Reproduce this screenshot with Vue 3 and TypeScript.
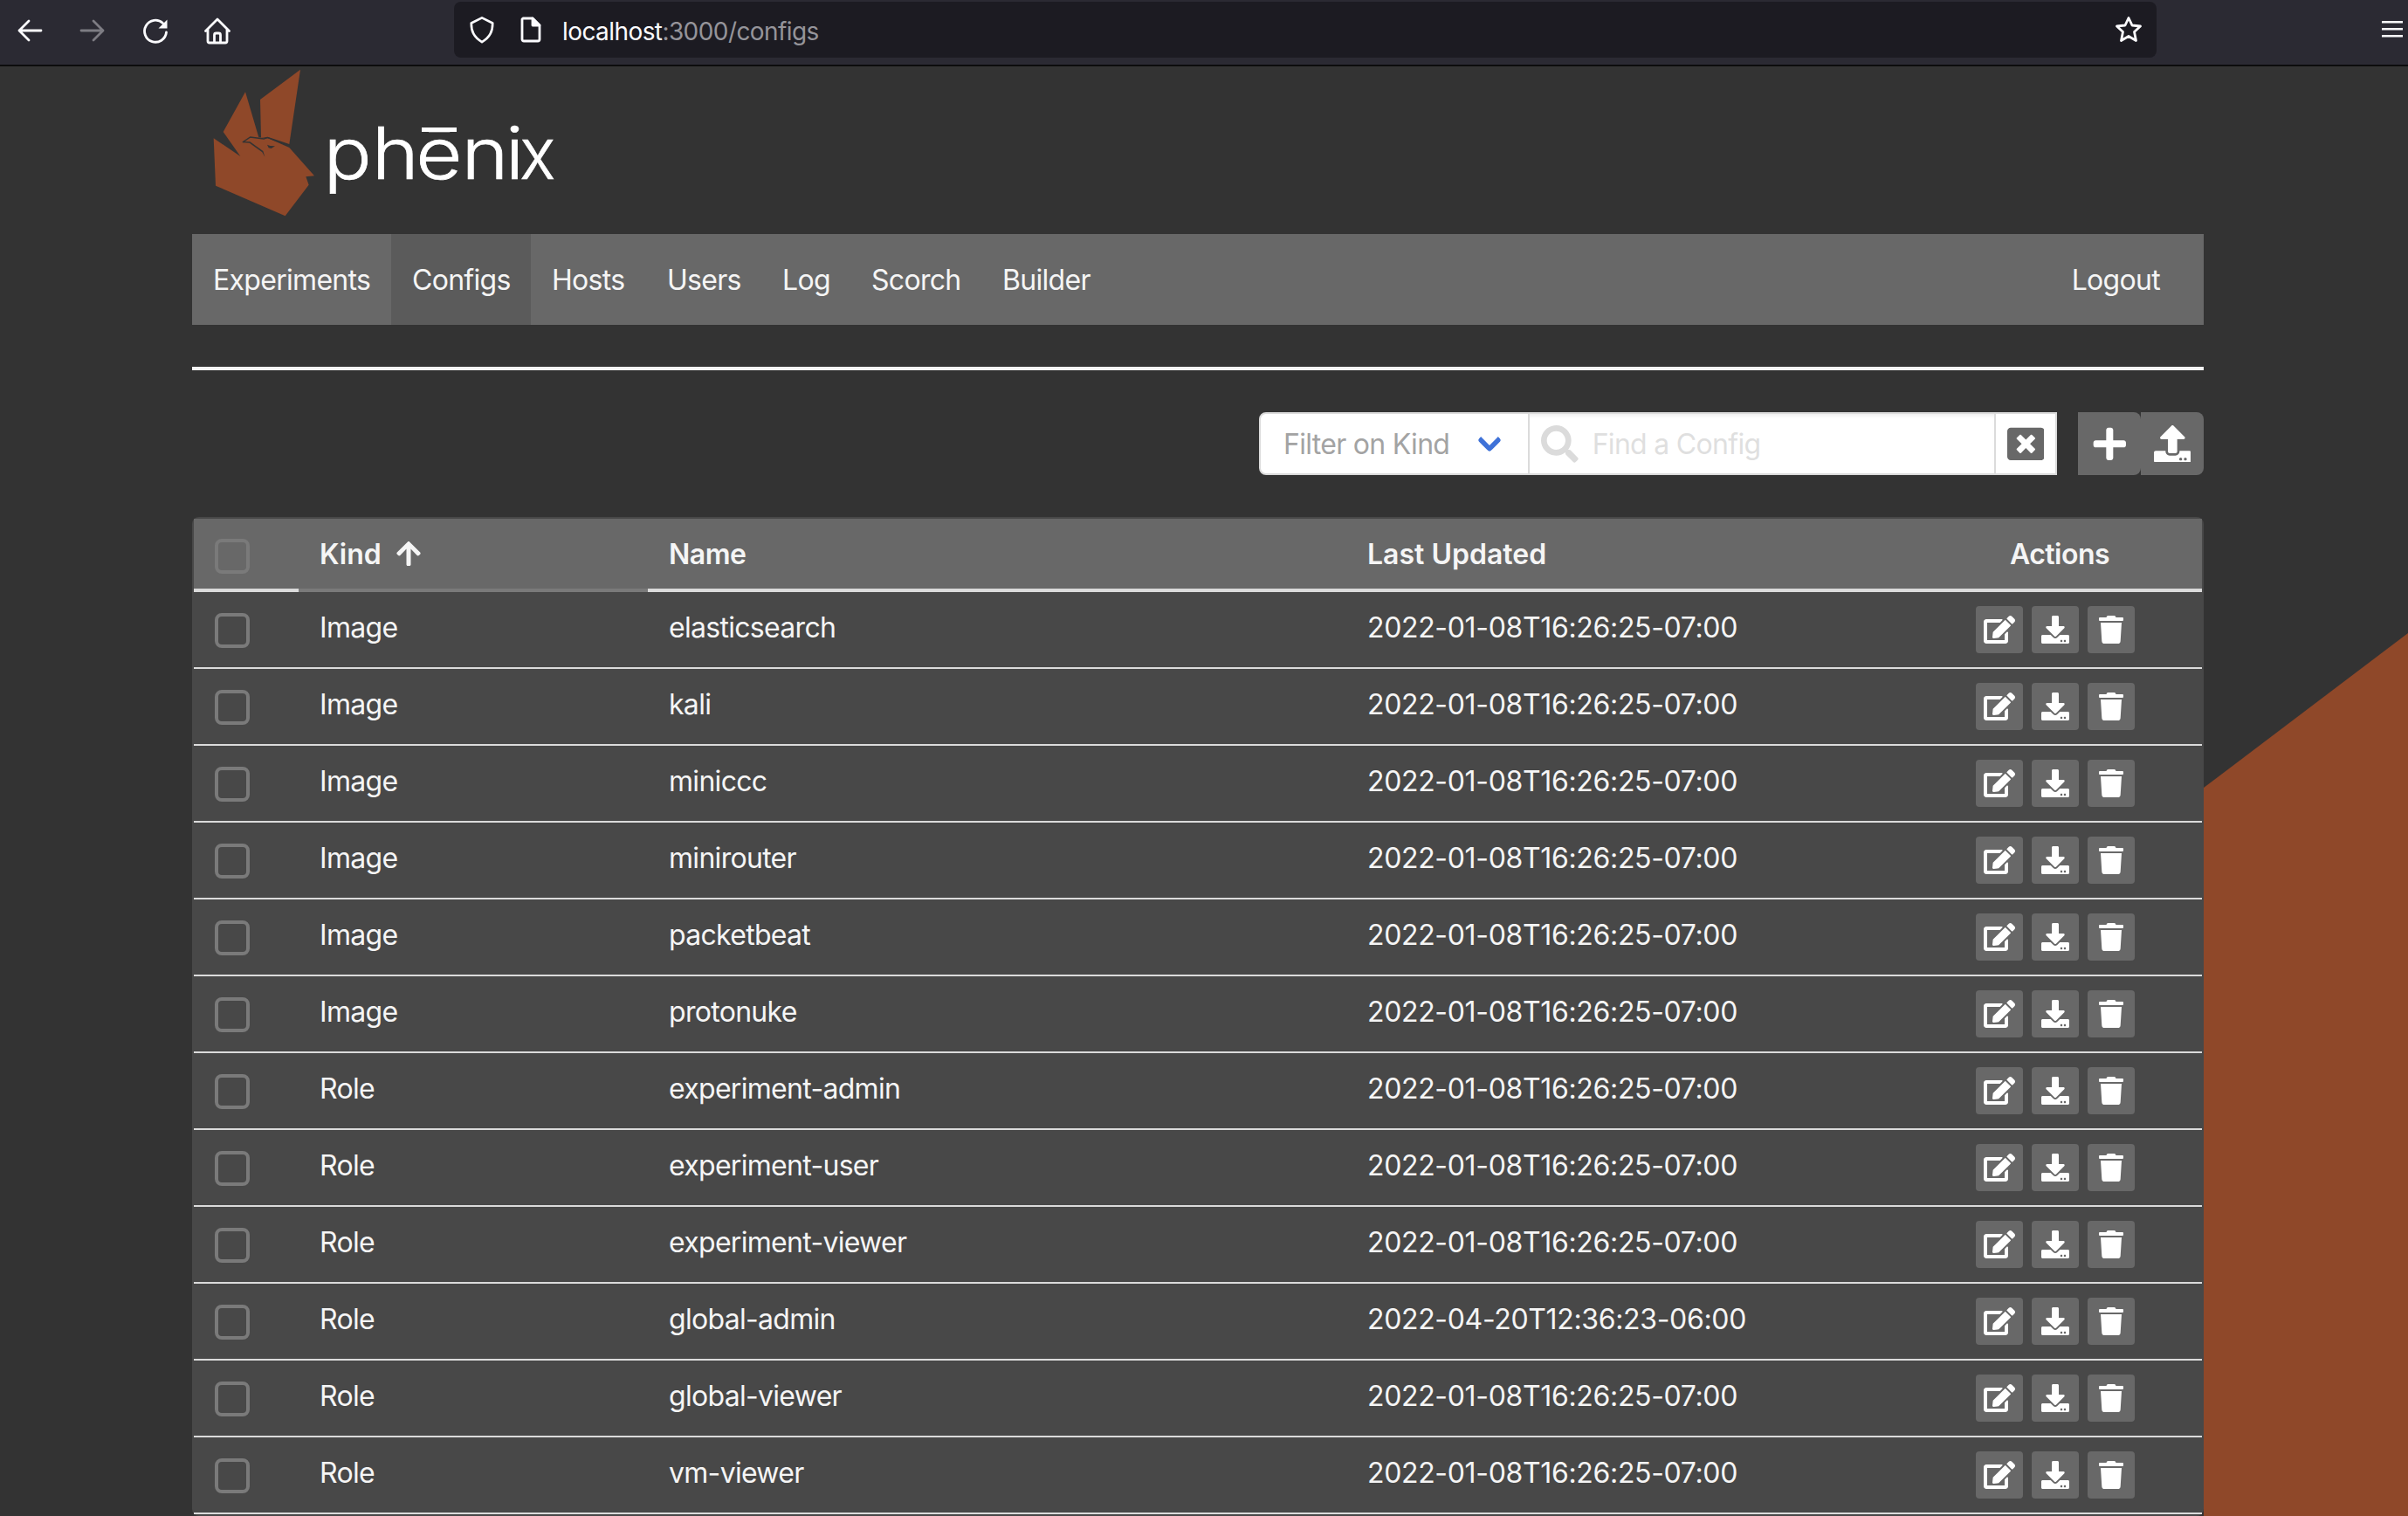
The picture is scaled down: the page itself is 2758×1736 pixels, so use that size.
<script setup lang="ts">
type IconDef = { w: number; d: string }

const icons: Record<string, IconDef> = {
  edit: { w: 576, d: 'M402.6 83.2l90.2 90.2c3.8 3.8 3.8 10 0 13.8L274.4 405.6l-92.8 10.3c-12.4 1.4-22.9-9.1-21.5-21.5l10.3-92.8L388.8 83.2c3.8-3.8 10-3.8 13.8 0zm162-22.9l-48.8-48.8c-15.2-15.2-39.9-15.2-55.2 0l-35.4 35.4c-3.8 3.8-3.8 10 0 13.8l90.2 90.2c3.8 3.8 10 3.8 13.8 0l35.4-35.4c15.2-15.3 15.2-40 0-55.2zM384 346.2V448H64V128h229.8c3.2 0 6.2-1.3 8.5-3.5l40-40c7.6-7.6 2.2-20.5-8.5-20.5H48C21.5 64 0 85.5 0 112v352c0 26.5 21.5 48 48 48h352c26.5 0 48-21.5 48-48V306.2c0-10.7-12.9-16-20.5-8.5l-40 40c-2.2 2.3-3.5 5.3-3.5 8.5z' },
  download: { w: 512, d: 'M216 0h80c13.3 0 24 10.7 24 24v168h87.7c17.8 0 26.7 21.5 14.1 34.1L269.7 378.3c-7.5 7.5-19.8 7.5-27.3 0L90.1 226.1c-12.6-12.6-3.7-34.1 14.1-34.1H192V24c0-13.3 10.7-24 24-24zm296 376v112c0 13.3-10.7 24-24 24H24c-13.3 0-24-10.7-24-24V376c0-13.3 10.7-24 24-24h146.7l49 49c20.1 20.1 52.5 20.1 72.6 0l49-49H488c13.3 0 24 10.7 24 24zm-124 88c0-11-9-20-20-20s-20 9-20 20 9 20 20 20 20-9 20-20zm64 0c0-11-9-20-20-20s-20 9-20 20 9 20 20 20 20-9 20-20z' },
  upload: { w: 512, d: 'M296 384h-80c-13.3 0-24-10.7-24-24V192h-87.7c-17.8 0-26.7-21.5-14.1-34.1L242.3 5.7c7.5-7.5 19.8-7.5 27.3 0l152.2 152.2c12.6 12.6 3.7 34.1-14.1 34.1H320v168c0 13.3-10.7 24-24 24zm216-8v112c0 13.3-10.7 24-24 24H24c-13.3 0-24-10.7-24-24V376c0-13.3 10.7-24 24-24h136v8c0 30.9 25.1 56 56 56h80c30.9 0 56-25.1 56-56v-8h136c13.3 0 24 10.7 24 24zm-124 88c0-11-9-20-20-20s-20 9-20 20 9 20 20 20 20-9 20-20zm64 0c0-11-9-20-20-20s-20 9-20 20 9 20 20 20 20-9 20-20z' },
  trash: { w: 448, d: 'M432 32H312l-9.4-18.7A24 24 0 0 0 281.1 0H166.8a23.72 23.72 0 0 0-21.4 13.3L136 32H16A16 16 0 0 0 0 48v32a16 16 0 0 0 16 16h416a16 16 0 0 0 16-16V48a16 16 0 0 0-16-16zM53.2 467a48 48 0 0 0 47.9 45h245.8a48 48 0 0 0 47.9-45L416 128H32z' },
  plus: { w: 448, d: 'M416 208H272V64c0-17.67-14.33-32-32-32h-32c-17.67 0-32 14.33-32 32v144H32c-17.67 0-32 14.33-32 32v32c0 17.67 14.33 32 32 32h144v144c0 17.67 14.33 32 32 32h32c17.67 0 32-14.33 32-32V304h144c17.67 0 32-14.33 32-32v-32c0-17.67-14.33-32-32-32z' },
  close: { w: 512, d: 'M464 32H48C21.5 32 0 53.5 0 80v352c0 26.5 21.5 48 48 48h416c26.5 0 48-21.5 48-48V80c0-26.5-21.5-48-48-48zm-83.6 290.5c4.8 4.8 4.8 12.6 0 17.4l-40.5 40.5c-4.8 4.8-12.6 4.8-17.4 0L256 313.3l-66.5 67.1c-4.8 4.8-12.6 4.8-17.4 0l-40.5-40.5c-4.8-4.8-4.8-12.6 0-17.4l67.1-66.5-67.1-66.5c-4.8-4.8-4.8-12.6 0-17.4l40.5-40.5c4.8-4.8 12.6-4.8 17.4 0l66.5 67.1 66.5-67.1c4.8-4.8 12.6-4.8 17.4 0l40.5 40.5c4.8 4.8 4.8 12.6 0 17.4L313.3 256l67.1 66.5z' },
  search: { w: 512, d: 'M505 442.7L405.3 343c-4.5-4.5-10.6-7-17-7H372c27.6-35.3 44-79.7 44-128C416 93.1 322.9 0 208 0S0 93.1 0 208s93.1 208 208 208c48.3 0 92.7-16.4 128-44v16.3c0 6.4 2.5 12.5 7 17l99.7 99.7c9.4 9.4 24.6 9.4 33.9 0l28.3-28.3c9.4-9.4 9.4-24.6.1-34zM208 336c-70.7 0-128-57.2-128-128 0-70.7 57.2-128 128-128 70.7 0 128 57.2 128 128 0 70.7-57.2 128-128 128z' },
  arrow: { w: 448, d: 'M34.9 289.5l-22.2-22.2c-9.4-9.4-9.4-24.6 0-33.9L207 39c9.4-9.4 24.6-9.4 33.9 0l194.3 194.3c9.4 9.4 9.4 24.6 0 33.9L413 289.4c-9.5 9.5-25 9.3-34.3-.4L264 168.6V456c0 13.3-10.7 24-24 24h-32c-13.3 0-24-10.7-24-24V168.6L69.2 289.1c-9.3 9.8-24.8 10-34.3.4z' },
}

const rowActions = ['edit', 'download', 'trash']

const navItems = [
  { label: 'Experiments', width: 228 },
  { label: 'Configs', width: 160, active: true },
  { label: 'Hosts', width: 132 },
  { label: 'Users', width: 132 },
  { label: 'Log', width: 102 },
  { label: 'Scorch', width: 150 },
  { label: 'Builder', width: 150 },
]

const stamp = '2022-01-08T16:26:25-07:00'
const rows = [
  { kind: 'Image', name: 'elasticsearch', updated: stamp },
  { kind: 'Image', name: 'kali', updated: stamp },
  { kind: 'Image', name: 'miniccc', updated: stamp },
  { kind: 'Image', name: 'minirouter', updated: stamp },
  { kind: 'Image', name: 'packetbeat', updated: stamp },
  { kind: 'Image', name: 'protonuke', updated: stamp },
  { kind: 'Role', name: 'experiment-admin', updated: stamp },
  { kind: 'Role', name: 'experiment-user', updated: stamp },
  { kind: 'Role', name: 'experiment-viewer', updated: stamp },
  { kind: 'Role', name: 'global-admin', updated: '2022-04-20T12:36:23-06:00' },
  { kind: 'Role', name: 'global-viewer', updated: stamp },
  { kind: 'Role', name: 'vm-viewer', updated: stamp },
]
</script>

<template>
  <div class="window">
    <header class="toolbar">
      <div class="tools">
        <svg class="tool" viewBox="0 0 32 32"><path d="M29 16H4M15 5 4 16l11 11" /></svg>
        <svg class="tool dim" viewBox="0 0 32 32"><path d="M3 16h25M17 5l11 11-11 11" /></svg>
        <svg class="tool" viewBox="0 0 32 32"><path d="M29.500 18a12.500 12.500 0 1 1-4-10.500" /><path d="M30.500 3.500v10h-10z" fill="#fbfbfe" stroke="none" /></svg>
        <svg class="tool" viewBox="0 0 32 32"><path d="M2.500 16.500 16 3l13.500 13.500M5 14.500V28a2 2 0 0 0 2 2h18a2 2 0 0 0 2-2V14.500M12.500 30V21a2 2 0 0 1 2-2h3a2 2 0 0 1 2 2v9" /></svg>
      </div>
      <div class="address">
        <svg class="tool" viewBox="0 0 32 34"><path d="M16 2.500 29 9c0 10-3 17-13 23C6 26 3 19 3 9z" /></svg>
        <svg class="tool page-icon" viewBox="0 0 32 32"><path d="M7 3h11l8 8v16a2 2 0 0 1-2 2H8a2 2 0 0 1-2-2V4z" /><path d="M18 3v8h8z" fill="#fbfbfe" /></svg>
        <span class="url"><b>localhost</b>:3000/configs</span>
        <svg class="tool star" viewBox="0 0 32 32"><path d="M16 2.500 l4 8.500 9.500 1-7 6.500 2 10-8.500-5-8.500 5 2-10-7-6.500 9.500-1z" /></svg>
      </div>
      <svg class="burger" viewBox="0 0 24 20"><path d="M0 1.250h24M0 9.250h24M0 17.250h24" /></svg>
    </header>

    <div class="page">
      <main class="container">
        <svg class="logo" viewBox="30 18 1320 576">
          <g fill="#8f4829">
            <path d="M402 29 264 132l3 131 23-3 74 25z" />
            <path d="M104 265l92 62-59-84 76-137 46 156 31 2 74 33 86 97-29 3 10 28-81 107-239-104z" />
          </g>
          <path d="M205 278l25-17 46 6 14-4 73 28" fill="none" stroke="#333" stroke-width="4" />
          <path d="M203 276l26 1 45 32 6 20-9-16-44-32-24-1z" fill="#333" />
          <path d="M288 287l10 4 17 1-13 8-9-2z" fill="#333" />
          <text class="wordmark" transform="scale(1.12 1)" y="404" x="430 578 713 853 988">phēni<tspan x="1032" textLength="110" lengthAdjust="spacingAndGlyphs">x</tspan></text>
          <path d="M819 228h120v15H819z" fill="#fff" />
        </svg>

        <nav class="navbar">
          <a v-for="n in navItems" :key="n.label" :class="{ active: n.active }" :style="{ width: n.width + 'px' }">{{ n.label }}</a>
          <a class="logout">Logout</a>
        </nav>

        <hr />

        <div class="filters">
          <div class="select">Filter on Kind<i></i></div>
          <div class="search">
            <svg class="big" viewBox="0 0 512 512"><path :d="icons.search.d" /></svg>
            <span>Find a Config</span>
          </div>
          <div class="clear"><svg class="big" viewBox="0 0 512 512"><path :d="icons.close.d" /></svg></div>
          <div class="square"><svg class="big" viewBox="-32 0 512 512"><path :d="icons.plus.d" /></svg></div>
          <div class="square"><svg class="big" viewBox="0 0 512 512"><path :d="icons.upload.d" /></svg></div>
        </div>

        <section class="table">
          <div class="row head">
            <div class="cell check"><i></i></div>
            <div class="cell kind sorted">Kind<svg viewBox="0 0 448 512"><path :d="icons.arrow.d" /></svg></div>
            <div class="cell name">Name</div>
            <div class="cell updated">Last Updated</div>
            <div class="cell actions">Actions</div>
          </div>
          <div v-for="r in rows" :key="r.name" class="row">
            <div class="cell check"><i></i></div>
            <div class="cell kind">{{ r.kind }}</div>
            <div class="cell name">{{ r.name }}</div>
            <div class="cell updated">{{ r.updated }}</div>
            <div class="cell actions">
              <button v-for="a in rowActions" :key="a">
                <svg :viewBox="`0 0 ${icons[a].w} 512`"><path :d="icons[a].d" /></svg>
              </button>
            </div>
          </div>
        </section>
      </main>
      <aside class="backdrop"></aside>
    </div>
  </div>
</template>

<style>
html,
body {
  margin: 0;
  background: #333;
  overflow: hidden;
}
</style>

<style scoped>
* {
  box-sizing: border-box;
}
.window {
  width: 2758px;
  height: 1736px;
  overflow: hidden;
  background: #333;
  color: #f5f5f5;
  font: 32px/48px Inter, "Liberation Sans", sans-serif;
  letter-spacing: -0.7px;
}
.toolbar {
  display: flex;
  align-items: flex-start;
  height: 76px;
  background: #2b2a33;
  border-bottom: 2px solid #0c0c0d;
}
.tools {
  display: flex;
  gap: 39.5px;
  width: 520px;
  padding: 19px 0 0 18px;
}
.tool {
  width: 32px;
  height: 32px;
  flex: none;
  fill: none;
  stroke: #fbfbfe;
  stroke-width: 2.8;
  stroke-linecap: round;
  stroke-linejoin: round;
}
.dim {
  stroke: #7d7c83;
}
.address {
  display: flex;
  align-items: center;
  width: 1950px;
  height: 64px;
  margin-top: 2px;
  padding: 0 16px;
  border-radius: 8px;
  background: #1c1b22;
}
.page-icon {
  margin-left: 24px;
}
.url {
  flex: 1;
  margin-left: 20px;
  padding-top: 3px;
  color: #95949a;
  font-size: 28px;
  letter-spacing: -0.58px;
}
.url b {
  font-weight: 400;
  color: #fbfbfe;
}
.burger {
  width: 24px;
  height: 20px;
  margin: 24px 0 0 258px;
  stroke: #fbfbfe;
  stroke-width: 2.5;
}
.page {
  display: flex;
  padding-left: 220px;
}
.container {
  width: 2304px;
  flex: none;
}
.backdrop {
  width: 234px;
  height: 1660px;
  background: #8f4829;
  clip-path: polygon(0 826px, 100% 649px, 100% 100%, 0 100%);
}
.logo {
  display: block;
  width: 440px;
  height: 192px;
}
.wordmark {
  font: 300 246px Inter, sans-serif;
  letter-spacing: 0;
  fill: #fff;
  stroke: #fff;
  stroke-width: 2;
}
.navbar {
  display: flex;
  height: 104px;
  padding-right: 24px;
  background: #686868;
}
.navbar a {
  padding: 29px 0 27px 24px;
  white-space: nowrap;
}
.navbar .active {
  background: #5b5b5b;
}
.navbar .logout {
  margin-left: auto;
  padding-right: 26px;
}
hr {
  height: 4px;
  margin: 48px 0;
  border: 0;
  background: #f5f5f5;
}
.filters {
  display: flex;
  justify-content: flex-end;
  height: 72px;
  margin-bottom: 48px;
}
.big {
  width: 42.667px;
  height: 42.667px;
  fill: #fff;
}
.select {
  display: flex;
  justify-content: space-between;
  width: 310px;
  padding: 11px 34px 0 26px;
  border: 2px solid #dbdbdb;
  border-radius: 8px 0 0 8px;
  background: #fff;
  color: #a3a3a3;
}
.select i {
  width: 20px;
  height: 20px;
  margin-top: 9px;
  border: solid #3f72d8;
  border-width: 0 0 6px 6px;
  border-radius: 4px;
  transform: rotate(-45deg);
}
.search {
  display: flex;
  width: 534px;
  padding: 11px 0 0 13px;
  border: 2px solid #dbdbdb;
  border-left: 0;
  background: #fff;
  color: #dfdfdf;
  box-shadow: inset 0 4px 4px -2px rgba(10, 10, 10, 0.08);
}
.search svg {
  margin: 2px 16px 0 0;
  fill: #dbdbdb;
}
.clear {
  display: flex;
  align-items: center;
  justify-content: center;
  width: 70px;
  margin-right: 24px;
  border: 2px solid #dbdbdb;
  border-left: 0;
  background: #fff;
}
.clear svg {
  fill: #686868;
}
.square {
  display: flex;
  align-items: center;
  justify-content: center;
  width: 72px;
  background: #686868;
  border-radius: 0 8px 8px 0;
}
.table {
  border: 2px solid #484848;
  border-radius: 8px;
  background: #484848;
}
.row {
  display: flex;
  height: 88px;
  border-bottom: 2px solid #dbdbdb;
}
.cell {
  padding: 17px 24px 15px;
}
.check {
  width: 120px;
}
.check i {
  display: block;
  width: 40px;
  height: 40px;
  margin-top: 7px;
  border: 4px solid #7a7a7a;
  border-radius: 8px;
}
.kind {
  width: 400px;
}
.name {
  width: 800px;
}
.updated {
  width: 654px;
  letter-spacing: -0.34px;
}
.actions {
  display: flex;
  justify-content: center;
  gap: 10px;
  width: 326px;
}
.row:not(.head) .actions {
  padding-top: 16px;
  padding-right: 34px;
}
.actions button {
  display: flex;
  align-items: center;
  justify-content: center;
  width: 54px;
  height: 54px;
  padding: 0;
  border: 0;
  border-radius: 4px;
  background: #686868;
}
.actions svg {
  height: 32px;
  fill: #fff;
}
.head {
  height: 84px;
  border: 0;
  background: #686868;
  font-weight: 600;
}
.head .cell {
  border-bottom: 4px solid #dbdbdb;
}
.head .check i {
  margin-top: 6px;
}
.head .sorted {
  display: flex;
  border-color: #7a7a7a;
  letter-spacing: 0;
}
.head .name,
.head .actions {
  letter-spacing: -0.5px;
}
.head .updated {
  letter-spacing: 0;
}
.sorted svg {
  width: 28px;
  height: 32px;
  margin: 7px 0 0 17px;
  fill: #f5f5f5;
}
</style>
